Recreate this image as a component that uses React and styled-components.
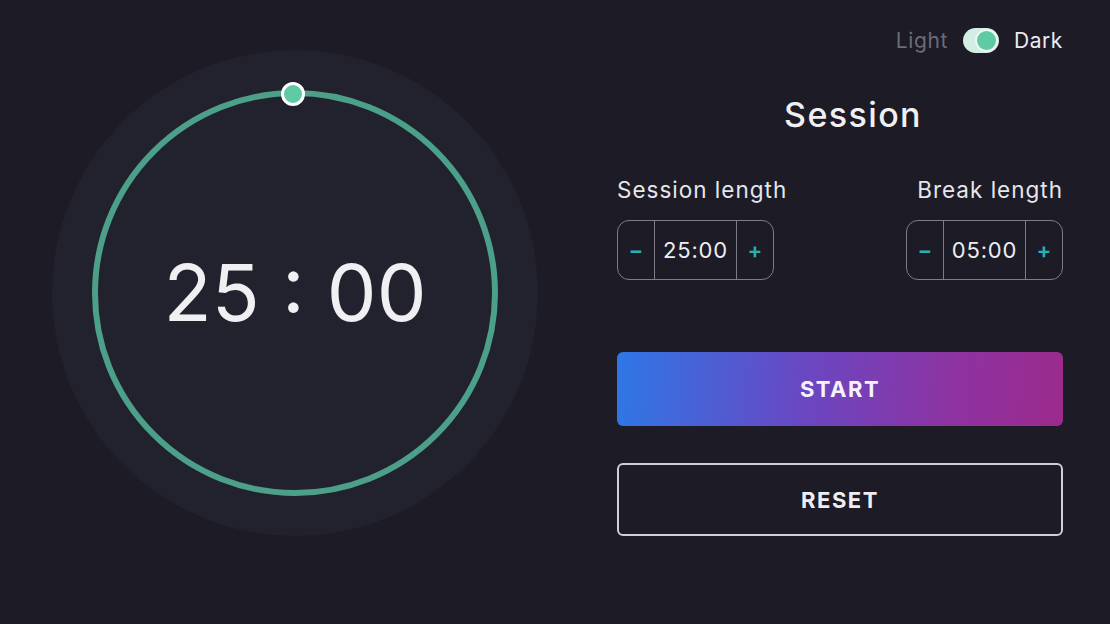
import React from "react";
import styled, { createGlobalStyle } from "styled-components";

const Global = createGlobalStyle`
  html, body { margin: 0; padding: 0; background: #1c1b26; }
  body { font-family: "Inter", "Noto Sans", sans-serif; }
  * { box-sizing: border-box; }
`;

const Page = styled.div`
  width: 1110px;
  height: 624px;
  display: flex;
  align-items: flex-start;
  background: #1c1b26;
  overflow: hidden;
`;

const Dial = styled.div`
  position: relative;
  margin: 50px 0 0 52px;
  width: 486px;
  height: 486px;
  border-radius: 50%;
  background: #21222e;
  display: flex;
  align-items: center;
  justify-content: center;
  flex-shrink: 0;
`;

const RingSvg = styled.svg`
  position: absolute;
  inset: 0;
`;

const Time = styled.div`
  position: relative;
  font-family: "Inter", sans-serif;
  font-size: 79px;
  font-weight: 400;
  color: #f0f0f3;
  letter-spacing: 0;
  margin-top: -2px;
`;

const Panel = styled.div`
  margin-left: 79px;
  width: 446px;
  padding-top: 28px;
  display: flex;
  flex-direction: column;
`;

const ThemeRow = styled.div`
  display: flex;
  justify-content: flex-end;
  align-items: center;
  height: 25px;
  gap: 15px;
`;

const ThemeLabel = styled.span`
  font-size: 21px;
  letter-spacing: 0.6px;
  color: ${(p) => (p.$active ? "#ebebf0" : "#6d6c78")};
`;

const Switch = styled.div`
  position: relative;
  width: 36px;
  height: 25px;
  border-radius: 13px;
  background: #d3eee4;
`;

const Knob = styled.div`
  position: absolute;
  right: 1px;
  top: 1px;
  width: 23px;
  height: 23px;
  border-radius: 50%;
  background: #5ecba5;
  border: 2px solid #eaf7f2;
`;

const Heading = styled.h1`
  margin: 42px 0 0;
  padding-left: 26px;
  text-align: center;
  font-size: 34px;
  line-height: 40px;
  font-weight: 500;
  letter-spacing: 1.4px;
  color: #f0f0f3;
`;

const Settings = styled.div`
  margin-top: 41px;
  display: flex;
  justify-content: space-between;
`;

const Setting = styled.div`
  display: flex;
  flex-direction: column;
  align-items: ${(p) => (p.$right ? "flex-end" : "flex-start")};
  gap: 16px;
`;

const Label = styled.div`
  font-size: 22.5px;
  line-height: 28px;
  letter-spacing: 1px;
  color: #e6e6ec;
`;

const Stepper = styled.div`
  display: flex;
  width: 157px;
  height: 60px;
  border: 1px solid #7d7c87;
  border-radius: 12px;
`;

const StepButton = styled.div`
  width: 36px;
  display: flex;
  align-items: center;
  justify-content: center;
  color: #2aaeb3;
  font-size: 22px;
  font-weight: 600;
`;

const StepValue = styled.div`
  flex: 1;
  display: flex;
  align-items: center;
  justify-content: center;
  border-left: 1px solid #7d7c87;
  border-right: 1px solid #7d7c87;
  color: #ededf2;
  font-size: 22px;
  letter-spacing: 0.8px;
`;

const StartButton = styled.div`
  margin-top: 72px;
  height: 74px;
  border-radius: 6px;
  background: linear-gradient(95deg, #2e77e6 0%, #6a47c2 42%, #8d33a1 75%, #9c2a8c 100%);
  display: flex;
  align-items: center;
  justify-content: center;
  color: #f6f2fb;
  font-size: 22px;
  font-weight: 700;
  letter-spacing: 1.5px;
`;

const ResetButton = styled.div`
  margin-top: 37px;
  height: 73px;
  border-radius: 6px;
  border: 2px solid #cfcfd6;
  display: flex;
  align-items: center;
  justify-content: center;
  color: #ededf2;
  font-size: 22px;
  font-weight: 700;
  letter-spacing: 1.5px;
`;

function LengthControl({ label, value, right }) {
  return (
    <Setting $right={right}>
      <Label>{label}</Label>
      <Stepper>
        <StepButton>−</StepButton>
        <StepValue>{value}</StepValue>
        <StepButton>+</StepButton>
      </Stepper>
    </Setting>
  );
}

export default function App() {
  return (
    <>
      <Global />
      <Page>
        <Dial>
          <RingSvg width="486" height="486" viewBox="0 0 486 486">
            <circle cx="243" cy="243" r="200" fill="none" stroke="#4c9f89" strokeWidth="6" />
            <circle cx="241" cy="44" r="10.5" fill="#5ecba5" stroke="#ffffff" strokeWidth="3" />
          </RingSvg>
          <Time>25 : 00</Time>
        </Dial>
        <Panel>
          <ThemeRow>
            <ThemeLabel>Light</ThemeLabel>
            <Switch>
              <Knob />
            </Switch>
            <ThemeLabel $active>Dark</ThemeLabel>
          </ThemeRow>
          <Heading>Session</Heading>
          <Settings>
            <LengthControl label="Session length" value="25:00" />
            <LengthControl label="Break length" value="05:00" right />
          </Settings>
          <StartButton>START</StartButton>
          <ResetButton>RESET</ResetButton>
        </Panel>
      </Page>
    </>
  );
}
